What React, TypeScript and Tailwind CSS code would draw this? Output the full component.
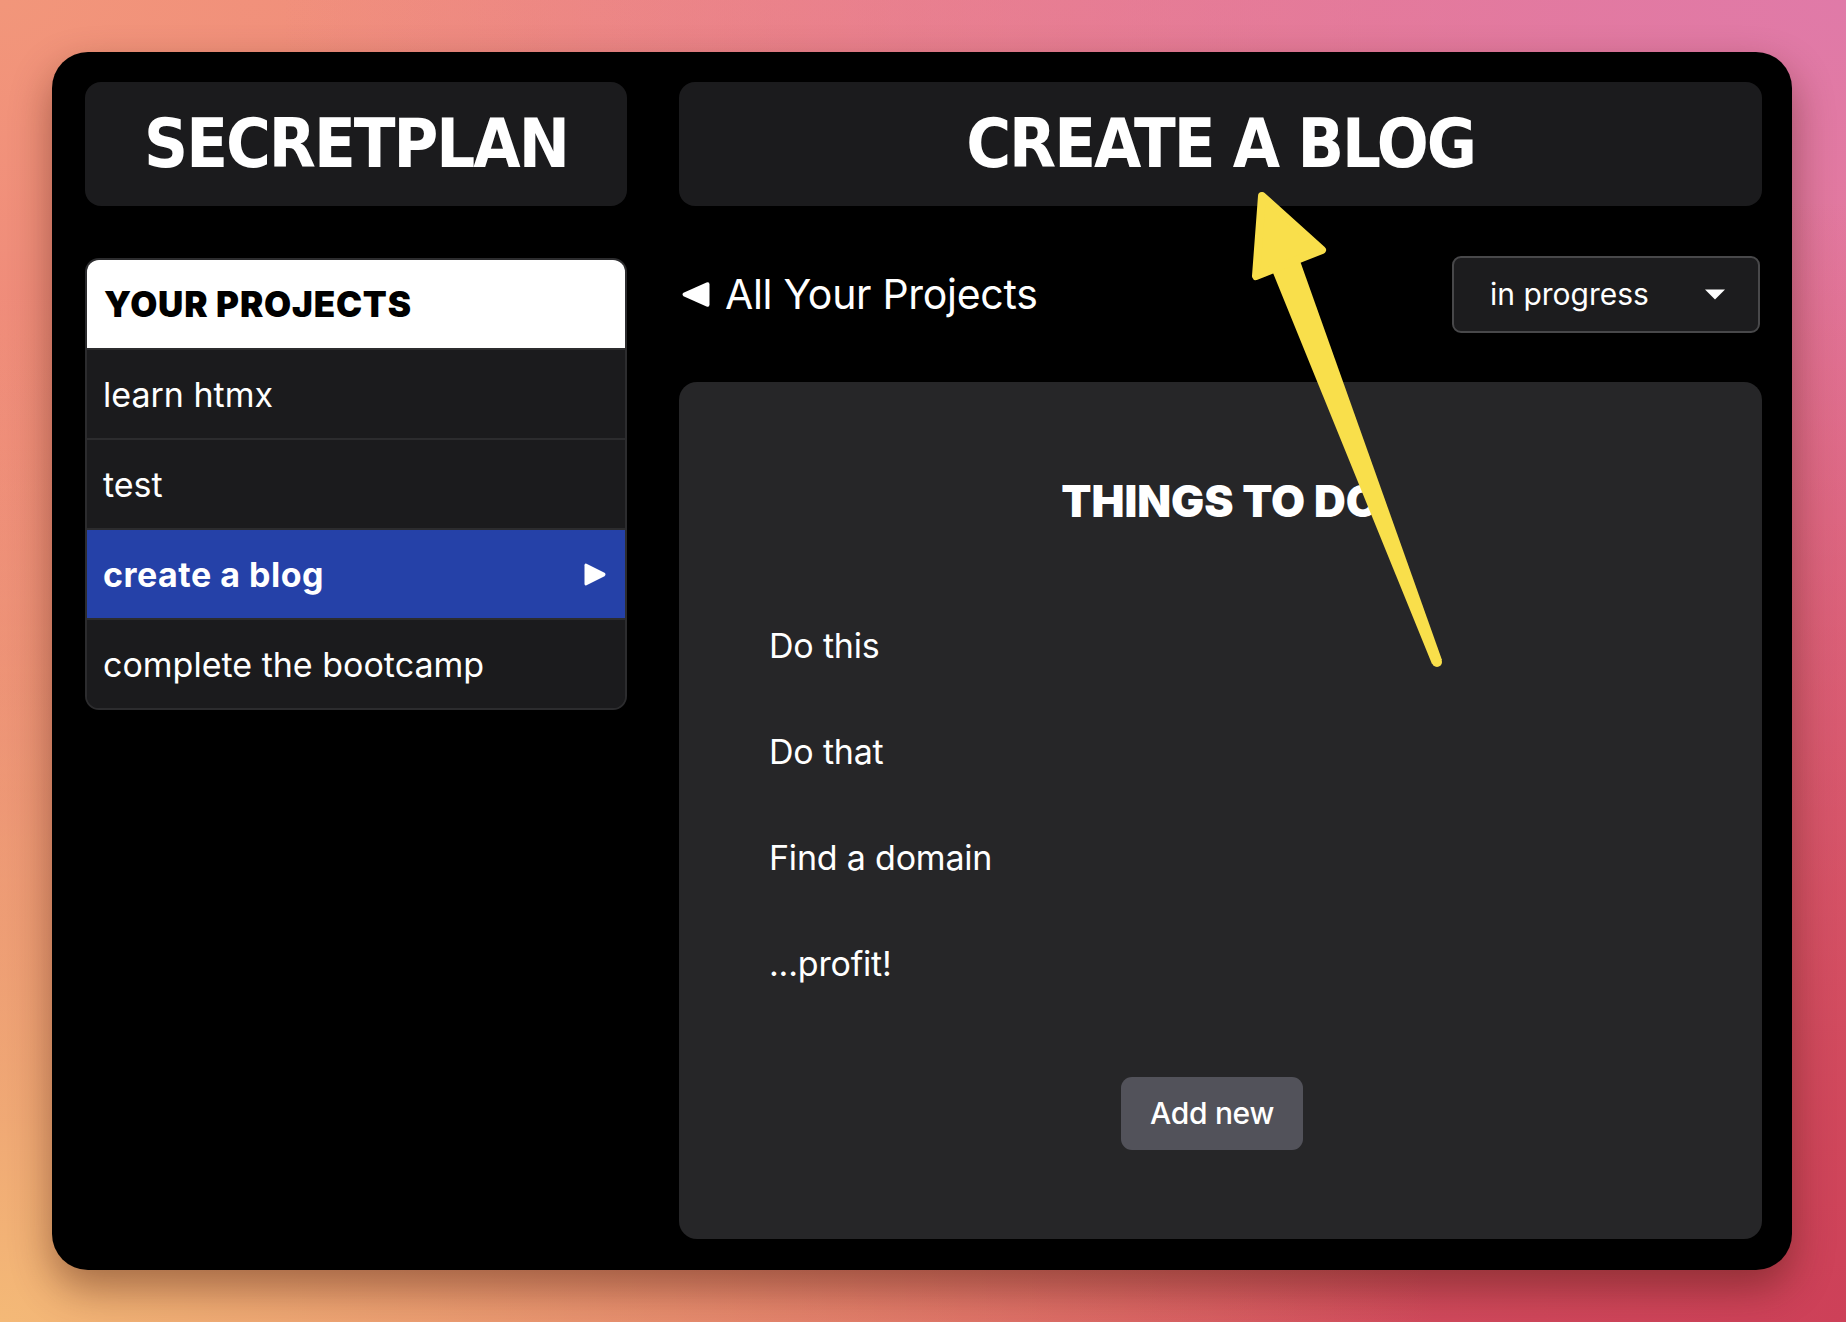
const titleCls =
  "text-white font-bold font-stretch-condensed text-[68px] leading-none tracking-[-2px] font-['Liberation_Sans_Narrow','DejaVu_Sans_Condensed','DejaVu_Sans',sans-serif]";

function Row({ label, active }: { label: string; active?: boolean }) {
  return (
    <div
      className={
        active
          ? "h-[90px] border-t-2 border-[#2c2c2e] bg-[#2541a8] flex items-center justify-between pl-[16px] pr-[18px]"
          : "h-[90px] border-t-2 border-[#2c2c2e] bg-[#1b1b1d] flex items-center pl-[16px]"
      }
    >
      <span
        className={
          active
            ? "text-white text-[34px] font-bold tracking-[0.5px]"
            : "text-white text-[34px] font-normal tracking-[0px]"
        }
      >
        {label}
      </span>
      {active && (
        <svg width="24" height="25" viewBox="0 0 24 25" className="block">
          <path d="M3.5 1.8 L21.5 10.8 Q23.5 12.5 21.5 14.2 L3.5 23.2 Q1.5 24 1.5 21.8 L1.5 3.2 Q1.5 1 3.5 1.8 Z" fill="#ffffff" />
        </svg>
      )}
    </div>
  );
}

export default function App() {
  return (
    <div className="relative w-[1846px] h-[1322px] overflow-hidden pt-[52px] pl-[52px] font-['Inter',sans-serif] bg-[radial-gradient(ellipse_at_0%_100%,#f4b977_0%,rgba(244,185,119,0)_55%),radial-gradient(ellipse_at_100%_100%,#cd4058_0%,rgba(205,64,88,0)_60%),radial-gradient(ellipse_at_100%_0%,#e07aa8_0%,rgba(224,122,168,0)_60%),radial-gradient(ellipse_at_0%_0%,#f2967a_0%,rgba(242,150,122,0)_60%),linear-gradient(#ec7680,#dc6468)]">
      <div className="w-[1740px] h-[1218px] rounded-[36px] bg-black shadow-[0_18px_40px_rgba(70,25,10,0.45)] pl-[33px] pr-[30px] pt-[30px] pb-[31px] flex gap-[52px]">
        {/* Left column */}
        <aside className="w-[542px] flex flex-col">
          <div className="h-[124px] rounded-[16px] bg-[#1b1b1d] flex items-center justify-center">
            <h1 className={titleCls}>SECRETPLAN</h1>
          </div>

          <div className="mt-[52px] rounded-[14px] border-2 border-[#2c2c2e] overflow-hidden bg-[#1b1b1d]">
            <div className="h-[88px] bg-white flex items-center pl-[17px]">
              <h2 className="text-black text-[35px] font-black tracking-[0.8px] leading-none">YOUR PROJECTS</h2>
            </div>
            <Row label="learn htmx" />
            <Row label="test" />
            <Row label="create a blog" active />
            <Row label="complete the bootcamp" />
          </div>
        </aside>

        {/* Right column */}
        <main className="flex-1 flex flex-col">
          <div className="h-[124px] rounded-[16px] bg-[#1b1b1d] flex items-center justify-center">
            <h1 className={titleCls}>CREATE A BLOG</h1>
          </div>

          <div className="h-[176px] flex items-center justify-between">
            <div className="flex items-center gap-[14px] ml-[2px]">
              <svg width="30" height="27" viewBox="0 0 30 27" className="block">
                <path d="M2.5 11.8 L25.5 1.6 Q28.5 0.5 28.5 3.5 L28.5 23.5 Q28.5 26.5 25.5 25.4 L2.5 15.2 Q0.5 13.5 2.5 11.8 Z" fill="#ffffff" />
              </svg>
              <span className="text-white text-[41px] leading-none tracking-[-0.3px]">All Your Projects</span>
            </div>
            <div className="w-[308px] h-[77px] mr-[2px] rounded-[9px] border-2 border-[#48484a] bg-[#1c1c1e] flex items-center justify-between pl-[36px] pr-[32px]">
              <span className="text-white text-[30px] leading-none">in progress</span>
              <svg width="22" height="11" viewBox="0 0 22 11" className="block">
                <path d="M1 0.5 L21 0.5 L11 10.5 Z" fill="#ffffff" />
              </svg>
            </div>
          </div>

          <section className="flex-1 rounded-[18px] bg-[#262628] flex flex-col pt-[97px]">
            <h3 className="text-white text-center text-[44px] leading-[44px] font-black tracking-[0px]">
              THINGS TO DO
            </h3>
            <ul className="mt-[69px] pl-[90px]">
              {["Do this", "Do that", "Find a domain", "...profit!"].map((t) => (
                <li key={t} className="h-[106px] flex items-center text-white text-[34px] tracking-[-0.2px]">
                  {t}
                </li>
              ))}
            </ul>
            <div className="mt-[61px] flex justify-center pr-[17px]">
              <button className="w-[182px] h-[73px] rounded-[11px] bg-[#52525a] text-white text-[30px] font-medium tracking-[-0.3px]">
                Add new
              </button>
            </div>
          </section>
        </main>
      </div>

      {/* Annotation arrow */}
      <svg
        className="absolute inset-0 pointer-events-none"
        width="1846"
        height="1322"
        viewBox="0 0 1846 1322"
      >
        <polygon points="1271,268 1299,258 1442,660 1432,664" fill="#f9df4b" />
        <circle cx="1437" cy="662" r="5" fill="#f9df4b" />
        <polygon
          points="1262,196 1322,250 1256,276"
          fill="#f9df4b"
          stroke="#f9df4b"
          strokeWidth="8"
          strokeLinejoin="round"
        />
      </svg>
    </div>
  );
}
